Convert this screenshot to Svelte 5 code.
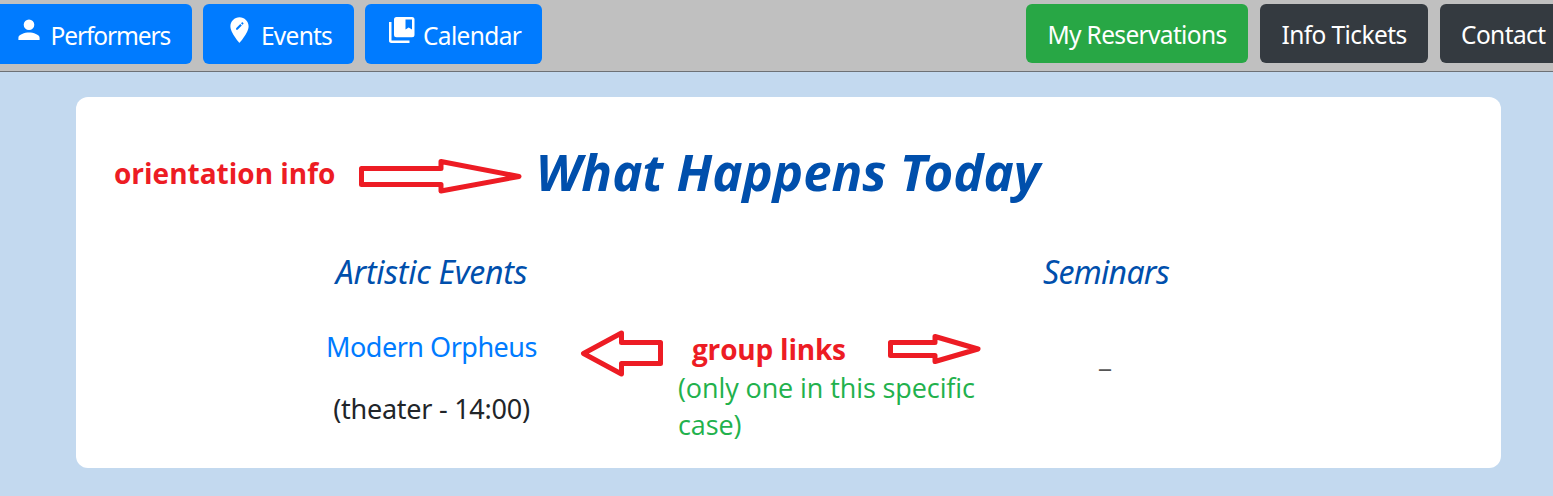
<script>
  const actions = [
    { label: 'My Reservations', kind: 'green' },
    { label: 'Info Tickets', kind: 'dark tickets' },
    { label: 'Contact', kind: 'dark contact' }
  ];
</script>

<header>
  <nav class="primary">
    <a class="btn performers" href="#performers">
      <svg viewBox="0 0 32 32"><path d="M16 16a5.3 5.3 0 1 0 0-10.6A5.3 5.3 0 0 0 16 16zm0 2.5c-4.200 0-10.600 2-10.600 5.300V26h21.200v-2.200c0-3.300-6.400-5.300-10.600-5.300z" /></svg>
      <span>Performers</span>
    </a>
    <a class="btn events" href="#events">
      <svg viewBox="0 0 32 32"><path fill-rule="evenodd" d="M16.500 3.200c-5 0-9.100 4-9.100 9 0 6.700 9.100 16.700 9.100 16.700s9.100-10 9.100-16.700c0-5-4.100-9-9.100-9zM14.600 15.700h-1.500v-1.500l4.200-4.200 1.500 1.500zm4.900-4.900-1.500-1.500.8-.8c.3-.3.700-.3 1 0l.5.5c.3.300.3.700 0 1z" /></svg>
      <span>Events</span>
    </a>
    <a class="btn calendar" href="#calendar">
      <svg viewBox="0 0 32 32"><path fill-rule="evenodd" d="M5.500 8H3v18.300A2.500 2.500 0 0 0 5.500 29H23.500v-2.500h-18zM26 3H10.500A2.500 2.500 0 0 0 8 5.500v15.300a2.500 2.500 0 0 0 2.500 2.500H26a2.500 2.500 0 0 0 2.500-2.500V5.500A2.500 2.500 0 0 0 26 3zm0 12.500L22.700 13.500 19.500 15.500V5.500H26z" /></svg>
      <span>Calendar</span>
    </a>
  </nav>
  <nav class="secondary">
    {#each actions as action}
      <a class="btn {action.kind}" href="#top"><span>{action.label}</span></a>
    {/each}
  </nav>
</header>

<main>
  <h1><span>What Happens Today</span></h1>
  <div class="groups">
    <section>
      <h2 class="artistic">Artistic Events</h2>
      <a class="event" href="#orpheus">Modern Orpheus</a>
      <p class="time">(theater - 14:00)</p>
    </section>
    <section>
      <h2 class="seminars">Seminars</h2>
      <p class="empty">_</p>
    </section>
  </div>
</main>

<div class="notes">
  <strong class="orientation">orientation info</strong>
  <strong class="links">group links</strong>
  <p class="remark">(only one in this specific<br />case)</p>
  <svg width="1553" height="496" viewBox="0 0 1553 496">
    <path d="M361.500 168.500H441V161.500L519 176.500L441 191V184.500H361.500Z" />
    <path d="M660.500 342.500H621.500V333L583.500 353.500L621.500 374V363.500H660.500Z" />
    <path d="M890.500 342.500H935V336.500L978 349L935 361.500V355.500H890.500Z" />
  </svg>
</div>

<style>
  :global(body) { background: #c3d9ef; overflow: hidden; }
  :global(#app) { font-family: 'Noto Sans', sans-serif; color: #212529; }
  header {
    display: flex; justify-content: space-between; align-items: flex-start;
    box-sizing: border-box; width: 1553px; height: 72px; padding-top: 4px;
    background: #c0c0c0; border-bottom: 1px solid #6d7175; overflow: hidden;
  }
  nav { display: flex; }
  .primary { gap: 11px; }
  .secondary { gap: 12px; margin-right: -16px; }
  .btn {
    display: flex; align-items: flex-start; box-sizing: border-box; height: 60px;
    border-radius: 6px; background: #007bff; color: #fff; text-decoration: none;
    font-size: 24.500px; line-height: 34px; white-space: nowrap; padding-top: 15px;
  }
  .btn svg { width: 32px; height: 32px; fill: currentColor; flex: none; margin-top: -5px; }
  .performers { width: 192px; padding-left: 13px; border-radius: 0 6px 6px 0; }
  .performers span { margin-left: 5.500px; letter-spacing: -1.100px; }
  .events { width: 151px; padding-left: 20px; }
  .events span { margin-left: 6px; letter-spacing: -0.750px; }
  .calendar { width: 177px; padding-left: 21px; }
  .calendar span { margin-left: 5px; letter-spacing: -0.650px; }
  .secondary .btn { height: 59px; padding-top: 14px; justify-content: center; }
  .green { width: 222px; background: #28a745; letter-spacing: -0.660px; }
  .dark { width: 168px; background: #343a40; letter-spacing: -0.600px; }
  .secondary .contact { width: 129px; justify-content: flex-start; padding-left: 21px; }

  main {
    box-sizing: border-box; width: 1425px; height: 371px; margin: 25px 0 0 76px;
    padding-top: 38px; background: #fff; border-radius: 12px;
  }
  h1 {
    margin: 0; padding-right: 1px; text-align: center; color: #004fac; font-size: 51px; line-height: 72px;
    font-style: italic; font-weight: 700; white-space: nowrap;
  }
  .groups { display: grid; grid-template-columns: 711px 638px; margin-top: 43px; }
  section { display: flex; flex-direction: column; align-items: center; white-space: nowrap; }
  h2 { margin: 0; color: #004fac; font-size: 32px; line-height: 44px; font-style: italic; font-weight: 400; }
  .artistic { letter-spacing: -0.270px; }
  .seminars { letter-spacing: -0.700px; }
  .event { margin-top: 34px; color: #007bff; font-size: 27px; line-height: 38px; letter-spacing: -0.500px; text-decoration: none; }
  p { margin: 0; }
  .time { margin-top: 24px; font-size: 27px; line-height: 38px; letter-spacing: -0.260px; }
  .empty { margin-top: 44px; padding-right: 2px; font-size: 27px; line-height: 38px; color: #555; }

  .notes { position: absolute; inset: 0; width: 1553px; height: 496px; pointer-events: none; font-family: 'Open Sans', sans-serif; white-space: nowrap; }
  .notes > * { position: absolute; }
  .notes svg { left: 0; top: 0; fill: none; stroke: #ed1c24; stroke-width: 5; stroke-linejoin: round; }
  .orientation, .links { color: #ed1c24; font-size: 28px; line-height: 38px; }
  .orientation { left: 114px; top: 154px; }
  .links { left: 692px; top: 330px; letter-spacing: -0.200px; }
  .remark { left: 678px; top: 369px; color: #22b14c; font-size: 27px; line-height: 37px; letter-spacing: -0.100px; }
</style>
